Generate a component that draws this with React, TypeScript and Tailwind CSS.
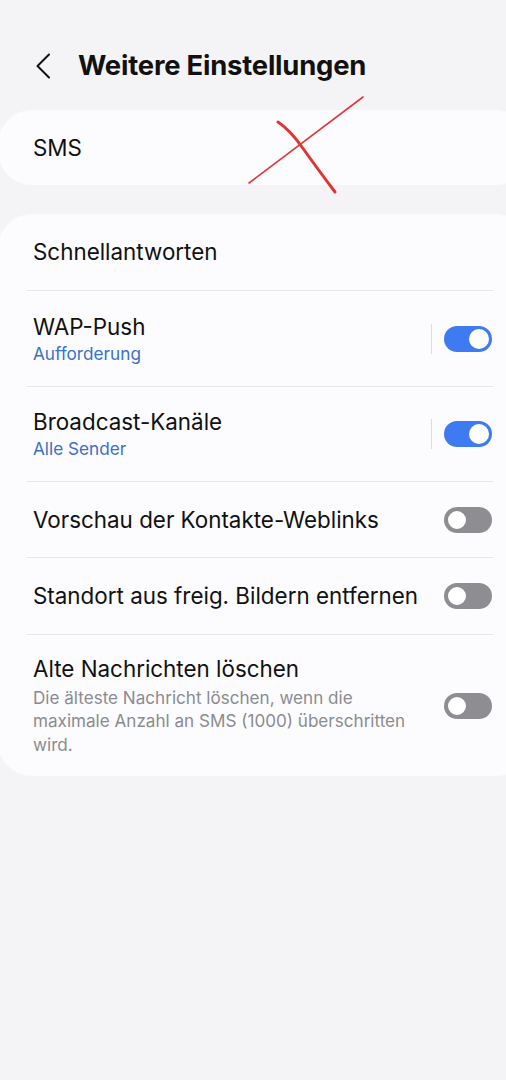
import React from 'react';

const font = { fontFamily: 'Inter, "Noto Sans", sans-serif' };

const Toggle: React.FC<{ on: boolean }> = ({ on }) =>
  on ? (
    <div className="w-[48px] h-[26px] rounded-full bg-[#3f7bf0] flex items-center justify-end pr-[3px]">
      <div className="w-[20px] h-[20px] rounded-full bg-white" />
    </div>
  ) : (
    <div className="w-[48px] h-[26px] rounded-full bg-[#8e8e92] flex items-center pl-[2px]">
      <div className="w-[22px] h-[22px] rounded-full bg-white border-[2px] border-[#8e8e92]" />
    </div>
  );

const Divider = () => <div className="ml-[27px] mr-[9px] h-px bg-[#e6e6e8]" />;

interface RowProps {
  title: string;
  sub?: string;
  desc?: string;
  toggle?: boolean;
  split?: boolean;
  h: string;
}

const Row: React.FC<RowProps> = ({ title, sub, desc, toggle, split, h }) => (
  <div className={`flex items-center pl-[33px] pr-[10px] ${h}`}>
    <div className="flex-1 min-w-0">
      <div className="text-[22.4px] leading-[28px] text-[#111]">{title}</div>
      {sub && <div className="text-[17.2px] leading-[22px] text-[#3b70c8] mt-[2px]">{sub}</div>}
      {desc && (
        <div className="text-[17.1px] leading-[23.5px] text-[#8b8b8f] mt-[3px] pr-[26px]">{desc}</div>
      )}
    </div>
    {split && <div className="w-px h-[30px] bg-[#dcdce0] mr-[12px]" />}
    {toggle !== undefined && <Toggle on={toggle} />}
  </div>
);

export default function App() {
  return (
    <div className="relative w-[506px] h-[1080px] bg-[#f4f4f6] overflow-hidden" style={font}>
      <div className="flex items-center h-[110px] pl-[33px] pt-[22px]">
        <svg width="20" height="26" viewBox="0 0 20 26" fill="none">
          <path d="M16 1.5 L4.5 13 L16 24.5" stroke="#111" strokeWidth="2" strokeLinecap="round" strokeLinejoin="round" />
        </svg>
        <h1 className="ml-[25px] text-[27.4px] font-bold text-[#111] tracking-[-0.2px]">Weitere Einstellungen</h1>
      </div>

      <div className="ml-[-2px] w-[532px] h-[75px] rounded-[34px] bg-[#fcfcfe] flex items-center pl-[35px]">
        <span className="text-[22.4px] text-[#111]">SMS</span>
      </div>

      <div className="mt-[29px] ml-[-2px] w-[532px] rounded-[34px] bg-[#fcfcfe] pl-[2px] pr-[28px]">
        <Row title="Schnellantworten" h="h-[76px]" />
        <Divider />
        <Row title="WAP-Push" sub="Aufforderung" toggle={true} split h="h-[95px]" />
        <Divider />
        <Row title="Broadcast-Kanäle" sub="Alle Sender" toggle={true} split h="h-[94px]" />
        <Divider />
        <Row title="Vorschau der Kontakte-Weblinks" toggle={false} h="h-[75px]" />
        <Divider />
        <Row title="Standort aus freig. Bildern entfernen" toggle={false} h="h-[76px]" />
        <Divider />
        <Row
          title="Alte Nachrichten löschen"
          desc="Die älteste Nachricht löschen, wenn die maximale Anzahl an SMS (1000) überschritten wird."
          toggle={false}
          h="h-[141px]"
        />
      </div>

      <svg className="absolute left-0 top-0 pointer-events-none" width="506" height="220" viewBox="0 0 506 220" fill="none">
        <path d="M249 183 L363 97" stroke="#dd3a3a" strokeWidth="1.6" strokeLinecap="round" />
        <path d="M278 122 Q290 130 302 147 T335 192" stroke="#e03535" strokeWidth="3" strokeLinecap="round" />
      </svg>
    </div>
  );
}
